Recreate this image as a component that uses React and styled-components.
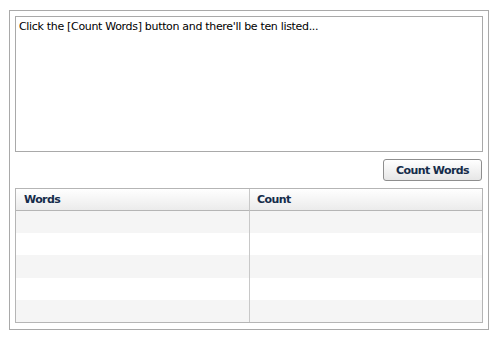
import React from "react";
import styled, { createGlobalStyle } from "styled-components";

const GlobalStyle = createGlobalStyle`
  body {
    margin: 0;
    background: #fff;
    font-family: "DejaVu Sans", Verdana, sans-serif;
  }
`;

const Panel = styled.div`
  box-sizing: border-box;
  margin: 10px 0 0 9px;
  width: 480px;
  height: 320px;
  padding: 5px;
  border: 1px solid #a9a9a9;
  display: flex;
  flex-direction: column;
`;

const TextBox = styled.textarea`
  box-sizing: border-box;
  width: 468px;
  height: 136px;
  margin: 0;
  padding: 3px;
  border: 1px solid #a9a9a9;
  resize: none;
  font-family: "DejaVu Sans", Verdana, sans-serif;
  font-size: 11px;
  letter-spacing: -0.32px;
  color: #000;
  outline: none;
`;

const ButtonRow = styled.div`
  display: flex;
  justify-content: flex-end;
  padding: 7px 1px 7px 0;
`;

const Button = styled.button`
  box-sizing: border-box;
  width: 99px;
  height: 22px;
  border: 1px solid #8e8e8e;
  border-radius: 3px;
  background: linear-gradient(#ffffff, #e6e6e6);
  font-family: "DejaVu Sans", Verdana, sans-serif;
  font-size: 11px;
  font-weight: bold;
  letter-spacing: -0.6px;
  color: #152c4a;
  cursor: pointer;
  padding: 0;
`;

const Grid = styled.div`
  box-sizing: border-box;
  height: 135px;
  border: 1px solid #b5b5b5;
  display: grid;
  grid-template-columns: 233px 1fr;
  grid-template-rows: 22px repeat(5, 1fr);
`;

const HeadCell = styled.div`
  box-sizing: border-box;
  padding: 0 ${(p) => (p.$first ? "8px" : "7px")};
  display: flex;
  align-items: center;
  border-bottom: 1px solid #b5b5b5;
  border-left: ${(p) => (p.$first ? "none" : "1px solid #c8c8c8")};
  background: linear-gradient(#ffffff, #ebebeb);
  font-size: 11px;
  font-weight: bold;
  letter-spacing: -0.6px;
  color: #152c4a;
`;

const Cell = styled.div`
  box-sizing: border-box;
  border-left: ${(p) => (p.$first ? "none" : "1px solid #c8c8c8")};
  background: ${(p) => (p.$shaded ? "#f5f5f5" : "#ffffff")};
`;

const rows = [0, 1, 2, 3, 4];

export default function App() {
  return (
    <>
      <GlobalStyle />
      <Panel>
        <TextBox defaultValue="Click the [Count Words] button and there'll be ten listed..." />
        <ButtonRow>
          <Button>Count Words</Button>
        </ButtonRow>
        <Grid>
          <HeadCell $first>Words</HeadCell>
          <HeadCell>Count</HeadCell>
          {rows.map((i) => (
            <React.Fragment key={i}>
              <Cell $first $shaded={i % 2 === 0} />
              <Cell $shaded={i % 2 === 0} />
            </React.Fragment>
          ))}
        </Grid>
      </Panel>
    </>
  );
}
